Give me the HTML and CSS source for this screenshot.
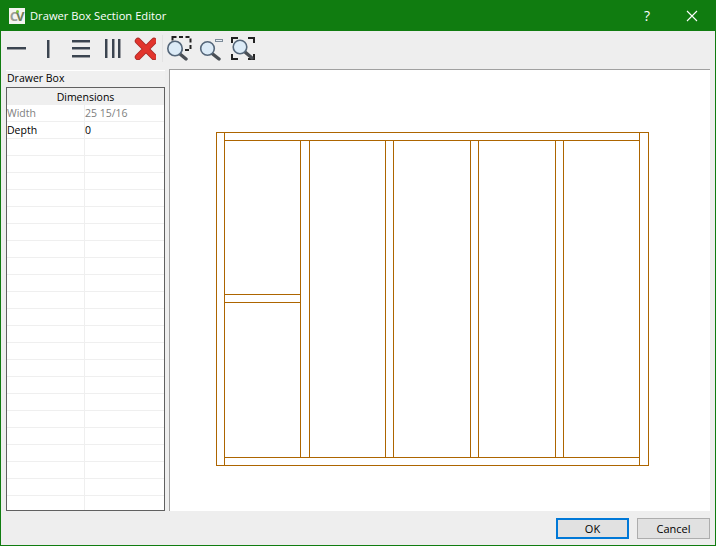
FILE: index.html
```html
<!DOCTYPE html>
<html lang="en">
<head>
    <meta charset="UTF-8">
    <title>Drawer Box Section Editor</title>
    <link rel="stylesheet" href="styles.css">
</head>
<body>
    <div class="window">
        <div class="titlebar">
            <span class="logo"><span class="logo-c">C</span><span class="logo-v">V</span><span class="logo-dot"></span></span>
            <span class="title">Drawer Box Section Editor</span>
            <span class="help">?</span>
            <svg class="close" width="12" height="12" viewBox="0 0 12 12">
                <path d="M1 1 L11 11 M11 1 L1 11" stroke="#fff" stroke-width="1.1" fill="none"/>
            </svg>
        </div>
        <div class="toolbar">
            <svg class="tool" width="20" height="20" viewBox="0 0 20 20">
                <rect x="1" y="10" width="19" height="2" fill="#9a9da2"/>
                <rect x="1" y="9" width="19" height="2" fill="#3b4450"/>
            </svg>
            <svg class="tool t-v" width="12" height="20" viewBox="0 0 12 20">
                <rect x="6" y="2" width="2" height="18" fill="#9a9da2"/>
                <rect x="5" y="2" width="2" height="18" fill="#3b4450"/>
            </svg>
            <svg class="tool t-h3" width="20" height="20" viewBox="0 0 20 20">
                <path d="M1 3h18v2H1zM1 10h18v2H1zM1 18h18v2H1z" fill="#9a9da2"/>
                <path d="M1 2h18v2H1zM1 9h18v2H1zM1 17h18v2H1z" fill="#3b4450"/>
            </svg>
            <svg class="tool t-v3" width="20" height="20" viewBox="0 0 20 20">
                <path d="M3 1h2v19H3zM10 1h2v19h-2zM16 1h2v19h-2z" fill="#9a9da2"/>
                <path d="M2 1h2v19H2zM9 1h2v19H9zM15 1h2v19h-2z" fill="#3b4450"/>
            </svg>
            <svg class="tool t-x" width="24" height="24" viewBox="0 0 24 24">
                <path d="M6 5 L22 21 M22 5 L6 21" stroke="#a82a26" stroke-width="6.4" stroke-linecap="round" fill="none"/>
                <path d="M6 5 L22 21 M22 5 L6 21" stroke="#e2352d" stroke-width="4.6" stroke-linecap="round" fill="none"/>
            </svg>
            <span class="sep"></span>
            <svg class="tool" width="26" height="26" viewBox="0 0 26 26">
                <rect x="6.5" y="2" width="18" height="13" fill="none" stroke="#222" stroke-width="2" stroke-dasharray="4 2.5"/>
                <path d="M14 19 L20 24" stroke="#4a4f55" stroke-width="3.4" stroke-linecap="round"/>
                <circle cx="9" cy="13.5" r="7.2" fill="#dcebf7" stroke="#55677a" stroke-width="1.6"/>
            </svg>
            <svg class="tool t-zoom-out" width="26" height="26" viewBox="0 0 26 26">
                <rect x="16.5" y="4.5" width="7" height="2" fill="#e8eef4" stroke="#7d8c99" stroke-width="1"/>
                <path d="M13 18.5 L20 24" stroke="#4a4f55" stroke-width="3.4" stroke-linecap="round"/>
                <circle cx="8.5" cy="13.5" r="6.8" fill="#dcebf7" stroke="#55677a" stroke-width="1.6"/>
            </svg>
            <svg class="tool t-zoom-fit" width="26" height="26" viewBox="0 0 26 26">
                <path d="M2 8V3h6M18 3h6v5M2 19v5h6M18 24h6v-5" fill="none" stroke="#222" stroke-width="2"/>
                <path d="M15 17 L22 23" stroke="#4a4f55" stroke-width="3.4" stroke-linecap="round"/>
                <circle cx="10" cy="12" r="6.8" fill="#dcebf7" stroke="#55677a" stroke-width="1.6"/>
            </svg>
        </div>
        <div class="main">
            <div class="side">
                <div class="side-head">Drawer Box</div>
                <div class="grid">
                    <div class="grid-head">Dimensions</div>
                    <div class="row muted"><span class="cell">Width</span><span class="cell">25 15/16</span></div>
                    <div class="row"><span class="cell">Depth</span><span class="cell">0</span></div>
                    <div class="row"><span class="cell"></span><span class="cell"></span></div>
                    <div class="row"><span class="cell"></span><span class="cell"></span></div>
                    <div class="row"><span class="cell"></span><span class="cell"></span></div>
                    <div class="row"><span class="cell"></span><span class="cell"></span></div>
                    <div class="row"><span class="cell"></span><span class="cell"></span></div>
                    <div class="row"><span class="cell"></span><span class="cell"></span></div>
                    <div class="row"><span class="cell"></span><span class="cell"></span></div>
                    <div class="row"><span class="cell"></span><span class="cell"></span></div>
                    <div class="row"><span class="cell"></span><span class="cell"></span></div>
                    <div class="row"><span class="cell"></span><span class="cell"></span></div>
                    <div class="row"><span class="cell"></span><span class="cell"></span></div>
                    <div class="row"><span class="cell"></span><span class="cell"></span></div>
                    <div class="row"><span class="cell"></span><span class="cell"></span></div>
                    <div class="row"><span class="cell"></span><span class="cell"></span></div>
                    <div class="row"><span class="cell"></span><span class="cell"></span></div>
                    <div class="row"><span class="cell"></span><span class="cell"></span></div>
                    <div class="row"><span class="cell"></span><span class="cell"></span></div>
                    <div class="row"><span class="cell"></span><span class="cell"></span></div>
                    <div class="row"><span class="cell"></span><span class="cell"></span></div>
                    <div class="row"><span class="cell"></span><span class="cell"></span></div>
                    <div class="row"><span class="cell"></span><span class="cell"></span></div>
                    <div class="row"><span class="cell"></span><span class="cell"></span></div>
                </div>
            </div>
            <div class="canvas">
                <svg class="drawing" width="540" height="441" viewBox="170 70 540 441" shape-rendering="crispEdges">
                    <g fill="none" stroke="#ad6500" stroke-width="1">
                        <rect x="216.5" y="132.5" width="432" height="333"/>
                        <path d="M224.5 132V465M639.5 132V465M224 140.5H639M224 457.5H639"/>
                        <path d="M300.5 140V457M309.5 140V457M385.5 140V457M393.5 140V457M470.5 140V457M478.5 140V457M555.5 140V457M563.5 140V457"/>
                        <path d="M224 294.5H300M224 302.5H300"/>
                    </g>
                </svg>
            </div>
        </div>
        <div class="footer">
            <button class="btn btn-default">OK</button>
            <button class="btn">Cancel</button>
        </div>
    </div>
</body>
</html>
```

FILE: styles.css
```css
html, body {
    margin: 0;
    padding: 0;
}
body {
    font-family: "Open Sans", "Noto Sans", sans-serif;
    font-size: 10.5px;
    color: #000;
    width: 716px;
    height: 546px;
    overflow: hidden;
}
.window {
    box-sizing: border-box;
    width: 716px;
    height: 546px;
    display: flex;
    flex-direction: column;
    background-color: #eeeeee;
    border: 1px solid #107c10;
    border-top: none;
}
.titlebar {
    height: 31px;
    flex: none;
    display: flex;
    align-items: center;
    background-color: #107c10;
    color: #fff;
    margin: 0 -1px;
    padding-left: 9px;
    font-size: 11.2px;
}
.logo {
    position: relative;
    width: 16px;
    height: 16px;
    background-color: #f4f4f0;
    display: flex;
    align-items: center;
    justify-content: center;
    font-size: 13px;
    font-weight: bold;
    letter-spacing: -2px;
    line-height: 16px;
    margin-right: 5px;
    overflow: hidden;
}
.logo-c {
    color: #9a9f96;
}
.logo-v {
    color: #6f7f5c;
    margin-right: 2px;
}
.logo-dot {
    position: absolute;
    left: 7px;
    top: 2px;
    width: 3px;
    height: 3px;
    border-radius: 50%;
    background-color: #7cc83a;
}
.title {
    flex: 1;
}
.help {
    font-size: 14px;
    margin-right: 36px;
}
.close {
    margin-right: 18px;
}
.toolbar {
    height: 38px;
    flex: none;
    box-sizing: border-box;
    display: flex;
    align-items: center;
    padding: 0 0 4px 5px;
}
.tool {
    flex: none;
}
.t-v {
    margin-left: 16px;
}
.t-h3 {
    margin-left: 17px;
}
.t-v3 {
    margin-left: 12px;
}
.t-x {
    margin-left: 9px;
}
.sep {
    width: 1px;
    height: 27px;
    background-color: #e2e2e2;
    margin: 0 3px 0 6px;
}
.t-zoom-out {
    margin-left: 7px;
}
.t-zoom-fit {
    margin-left: 5px;
}
.main {
    flex: 1;
    display: flex;
    padding-left: 5px;
    padding-right: 5px;
    min-height: 0;
}
.side {
    width: 159px;
    flex: none;
    margin-right: 4px;
    display: flex;
    flex-direction: column;
    margin-top: 1px;
}
.side-head {
    height: 17px;
    line-height: 15px;
    padding-left: 1px;
    background-color: #f0f0f0;
    border-top: 1px solid #fff;
    box-sizing: border-box;
}
.grid {
    flex: 1;
    border: 1px solid #606060;
    background-color: #fff;
    overflow: hidden;
}
.grid-head {
    height: 17px;
    line-height: 19px;
    text-align: center;
    background-color: #efefef;
}
.row {
    display: flex;
    height: 17px;
    box-sizing: border-box;
    border-bottom: 1px solid #efefef;
    line-height: 16px;
}
.muted {
    color: #808080;
}
.cell {
    display: block;
    width: 77px;
    height: 16px;
}
.cell + .cell {
    border-left: 1px solid #efefef;
    width: auto;
    flex: 1;
}
.canvas {
    flex: 1;
    background-color: #fff;
    border-left: 1px solid #a0a0a0;
    border-top: 1px solid #a0a0a0;
}
.drawing {
    display: block;
}
.footer {
    height: 34px;
    flex: none;
    display: flex;
    justify-content: flex-end;
    gap: 8px;
    padding: 7px 5px 0 0;
    box-sizing: border-box;
}
.btn {
    width: 73px;
    height: 21px;
    box-sizing: border-box;
    border: 1px solid #adadad;
    background-color: #e1e1e1;
    font-family: inherit;
    font-size: 11px;
    padding: 0;
    color: #000;
}
.btn-default {
    border: 2px solid #0078d7;
}
```
